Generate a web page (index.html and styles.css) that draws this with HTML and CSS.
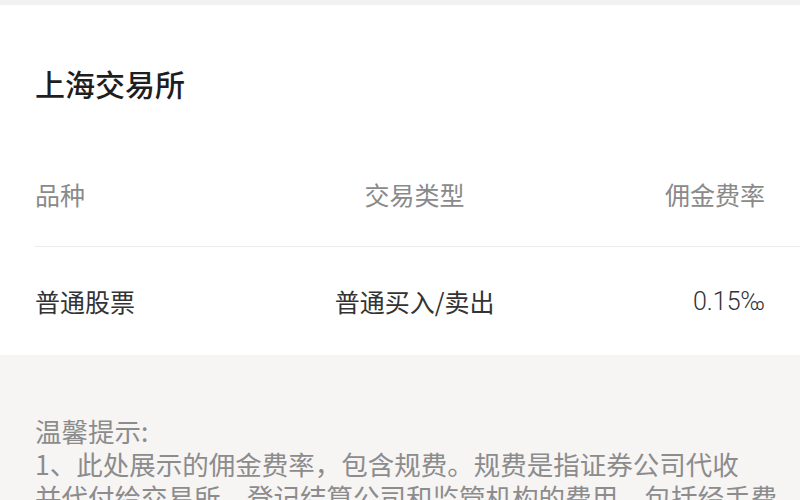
FILE: index.html
```html
<!DOCTYPE html>
<html lang="zh-CN">
<head>
  <meta charset="UTF-8">
  <meta name="viewport" content="width=device-width, initial-scale=1">
  <title>佣金费率</title>
  <link rel="stylesheet" href="styles.css">
</head>
<body>

<div class="card">
  <h2 class="title">上海交易所</h2>

  <div class="table">
    <div class="row head">
      <span>品种</span>
      <span class="mid">交易类型</span>
      <span class="end">佣金费率</span>
    </div>
    <div class="row">
      <span>普通股票</span>
      <span class="mid">普通买入/卖出</span>
      <span class="end num">0.15‰</span>
    </div>
  </div>
</div>

<div class="tips">
  <p>温馨提示:</p>
  <p>1、此处展示的佣金费率，包含规费。规费是指证券公司代收</p>
  <p>并代付给交易所、登记结算公司和监管机构的费用，包括经手费</p>
</div>

</body>
</html>
```

FILE: styles.css
```css
body {
  margin: 0;
  background: #f7f4f4;
  font-family: "Noto Sans CJK SC", "Noto Sans", sans-serif;
  border-top: 5px solid #f1f1f1;
}
.card {
  background: #fff;
  padding-top: 58px;
}
.title {
  margin: 0 0 38px 35px;
  font-size: 30px;
  line-height: 40px;
  font-weight: 500;
  color: #1e1e1e;
}
.table {
  margin-left: 35px;
}
.row {
  display: grid;
  grid-template-columns: 38% 28% 34%;
  align-items: center;
  height: 108px;
  padding-right: 35px;
  font-size: 25px;
  color: #333;
}
.row.head {
  height: 105px;
  color: #8a8a8a;
  border-bottom: 1px solid #ececec;
}
.mid {
  text-align: center;
}
.end {
  text-align: right;
}
.num {
  font-family: "Roboto", sans-serif;
  font-weight: 300;
  color: #333;
}
.tips {
  padding: 59px 35px 0;
  color: #8c8c8c;
  font-size: 26.5px;
}
.tips p {
  margin: 0;
  line-height: 33px;
  white-space: nowrap;
}
```
